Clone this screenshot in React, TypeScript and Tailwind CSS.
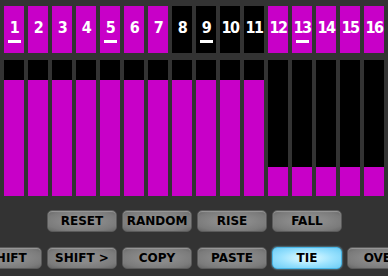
const pads = [
  { n: 1, on: true, mark: true, level: 116 },
  { n: 2, on: true, level: 116 },
  { n: 3, on: true, level: 116 },
  { n: 4, on: true, level: 116 },
  { n: 5, on: true, mark: true, level: 116 },
  { n: 6, on: true, level: 116 },
  { n: 7, on: true, level: 116 },
  { n: 8, on: false, level: 116 },
  { n: 9, on: false, mark: true, level: 116 },
  { n: 10, on: false, level: 116 },
  { n: 11, on: false, level: 116 },
  { n: 12, on: true, level: 29 },
  { n: 13, on: true, mark: true, level: 29 },
  { n: 14, on: true, level: 29 },
  { n: 15, on: true, level: 29 },
  { n: 16, on: true, level: 29 },
];

function Btn({ label, active }: { label: string; active?: boolean }) {
  return (
    <div
      className={`w-[70px] h-[22px] shrink-0 rounded-[5px] flex items-center justify-center text-[12px] font-bold text-black border ${
        active
          ? "border-[#49b6e6] bg-[radial-gradient(ellipse_at_center,#d4f6ff_15%,#9ae2fe_55%,#6cccf5_100%)] shadow-[0_0_2px_#8fdcff]"
          : "border-[#5a5a5a] bg-[radial-gradient(ellipse_at_center,#8a8a8a_35%,#7b7b7b_75%,#666666_100%)] shadow-[inset_0_1px_1px_#9a9a9a]"
      }`}
    >
      {label}
    </div>
  );
}

export default function App() {
  return (
    <div
      className="w-[388px] h-[276px] overflow-hidden bg-[#333333]"
      style={{ fontFamily: '"DejaVu Sans", sans-serif' }}
    >
      {/* step pads */}
      <div className="flex gap-[4px] px-[4px] pt-[6px]">
        {pads.map((p) => (
          <div
            key={p.n}
            className={`w-[20px] h-[47px] flex flex-col items-center justify-center ${p.on ? "bg-[#c800c8]" : "bg-black"}`}
          >
            <span
              className="text-white font-bold text-[16px] leading-none tracking-[-1.5px] mt-[3px]"
              style={{ fontFamily: '"DejaVu Sans Condensed", "DejaVu Sans", sans-serif' }}
            >
              {p.n}
            </span>
            <div className={`w-[13px] h-[3px] mt-[4px] ${p.mark ? "bg-white" : "bg-transparent"}`} />
          </div>
        ))}
      </div>

      {/* value bars */}
      <div className="flex gap-[4px] px-[4px] pt-[7px]">
        {pads.map((p) => (
          <div key={p.n} className="w-[20px] h-[136px] bg-black flex flex-col justify-end">
            <div className="bg-[#c800c8]" style={{ height: p.level }} />
          </div>
        ))}
      </div>

      {/* buttons */}
      <div className="flex gap-[5px] pl-[47px] mt-[14px]">
        <Btn label="RESET" />
        <Btn label="RANDOM" />
        <Btn label="RISE" />
        <Btn label="FALL" />
      </div>
      <div className="flex gap-[5px] ml-[-28px] mt-[15px]">
        <Btn label="SHIFT" />
        <Btn label="SHIFT >" />
        <Btn label="COPY" />
        <Btn label="PASTE" />
        <Btn label="TIE" active />
        <Btn label="OVER" />
      </div>
    </div>
  );
}
